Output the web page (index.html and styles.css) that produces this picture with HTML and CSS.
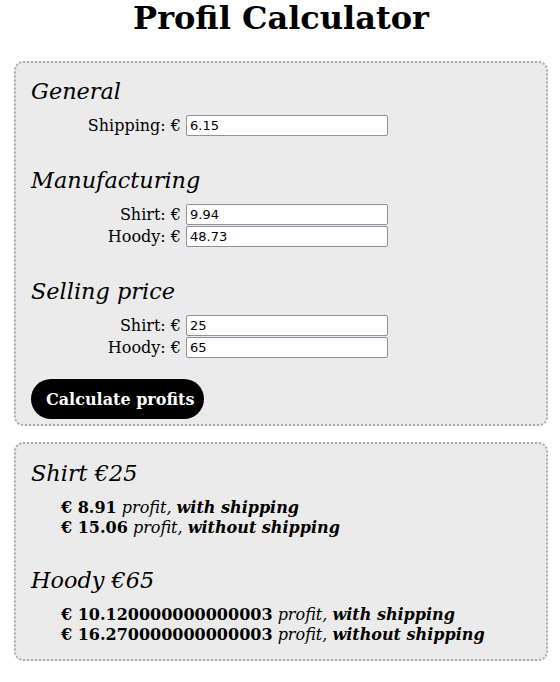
FILE: index.html
```html
<!DOCTYPE html>
<html lang="en">
<head>
<meta charset="utf-8">
<title>Profil Calculator</title>
<link rel="stylesheet" href="styles.css">
</head>
<body>
<h1 class="title">Profil Calculator</h1>

<form class="panel form-panel">
  <div class="group">
    <h2 class="group-title">General</h2>
    <div class="fields">
      <label class="field-label" for="shipping">Shipping: €</label>
      <input class="field-input" id="shipping" type="text" value="6.15">
    </div>
  </div>

  <div class="group">
    <h2 class="group-title">Manufacturing</h2>
    <div class="fields">
      <label class="field-label" for="m-shirt">Shirt: €</label>
      <input class="field-input" id="m-shirt" type="text" value="9.94">
      <label class="field-label" for="m-hoody">Hoody: €</label>
      <input class="field-input" id="m-hoody" type="text" value="48.73">
    </div>
  </div>

  <div class="group">
    <h2 class="group-title">Selling price</h2>
    <div class="fields">
      <label class="field-label" for="s-shirt">Shirt: €</label>
      <input class="field-input" id="s-shirt" type="text" value="25">
      <label class="field-label" for="s-hoody">Hoody: €</label>
      <input class="field-input" id="s-hoody" type="text" value="65">
    </div>
  </div>

  <button class="calc-button" type="button">Calculate profits</button>
</form>

<section class="panel results-panel">
  <div class="group result-group">
    <h2 class="group-title">Shirt €25</h2>
    <div class="result-lines">
      <div class="result"><b>€ 8.91</b> <i class="profit">profit,</i> <b><i>with shipping</i></b></div>
      <div class="result"><b>€ 15.06</b> <i class="profit">profit,</i> <b><i>without shipping</i></b></div>
    </div>
  </div>
  <div class="group result-group">
    <h2 class="group-title">Hoody €65</h2>
    <div class="result-lines">
      <div class="result"><b>€ 10.120000000000003</b> <i class="profit">profit,</i> <b><i>with shipping</i></b></div>
      <div class="result"><b>€ 16.270000000000003</b> <i class="profit">profit,</i> <b><i>without shipping</i></b></div>
    </div>
  </div>
</section>
</body>
</html>
```

FILE: styles.css
```css
html, body {
  background: #ffffff;
}

body {
  margin: 0 12px 0 14px;
  font-family: "DejaVu Serif", serif;
  font-size: 16px;
  color: #000000;
}

.title {
  margin: 0 0 24px;
  font-size: 32px;
  font-weight: bold;
  line-height: 37px;
  text-align: center;
}

.panel {
  display: flex;
  flex-direction: column;
  margin: 0;
  border: 2px dotted #a9a9a9;
  border-radius: 9px;
  background: #ebebeb;
}

.form-panel {
  gap: 30px;
  padding: 14px 15px 5px;
}

.form-panel .calc-button {
  margin-top: -9px;
}

.results-panel {
  gap: 28px;
  margin-top: 16px;
  padding: 15px 15px 14px;
}

.group {
  display: flex;
  flex-direction: column;
  gap: 10px;
}

.result-group {
  gap: 11px;
}

.group-title {
  margin: 0;
  font-family: "DejaVu Serif", serif;
  font-size: 22.4px;
  font-weight: normal;
  font-style: italic;
  line-height: 28px;
}

.fields {
  display: grid;
  grid-template-columns: 150px 202px;
  column-gap: 5px;
  row-gap: 1px;
  align-items: center;
}

.field-label {
  text-align: right;
  line-height: 19px;
}

.field-input {
  box-sizing: border-box;
  width: 202px;
  height: 21px;
  margin: 0;
  padding: 0 3px;
  border: 1px solid #8f8f9d;
  border-radius: 2px;
  background: #ffffff;
  font-family: "DejaVu Sans", sans-serif;
  font-size: 13px;
  color: #000000;
}

.calc-button {
  align-self: flex-start;
  height: 40px;
  padding: 0 10px 0 15px;
  border: none;
  border-radius: 20px;
  background: #000000;
  color: #ffffff;
  font-family: "DejaVu Serif", serif;
  font-size: 16px;
  font-weight: bold;
}

.result-lines {
  padding-left: 30px;
}

.result {
  line-height: 20px;
}

.profit {
  font-weight: normal;
}
```
